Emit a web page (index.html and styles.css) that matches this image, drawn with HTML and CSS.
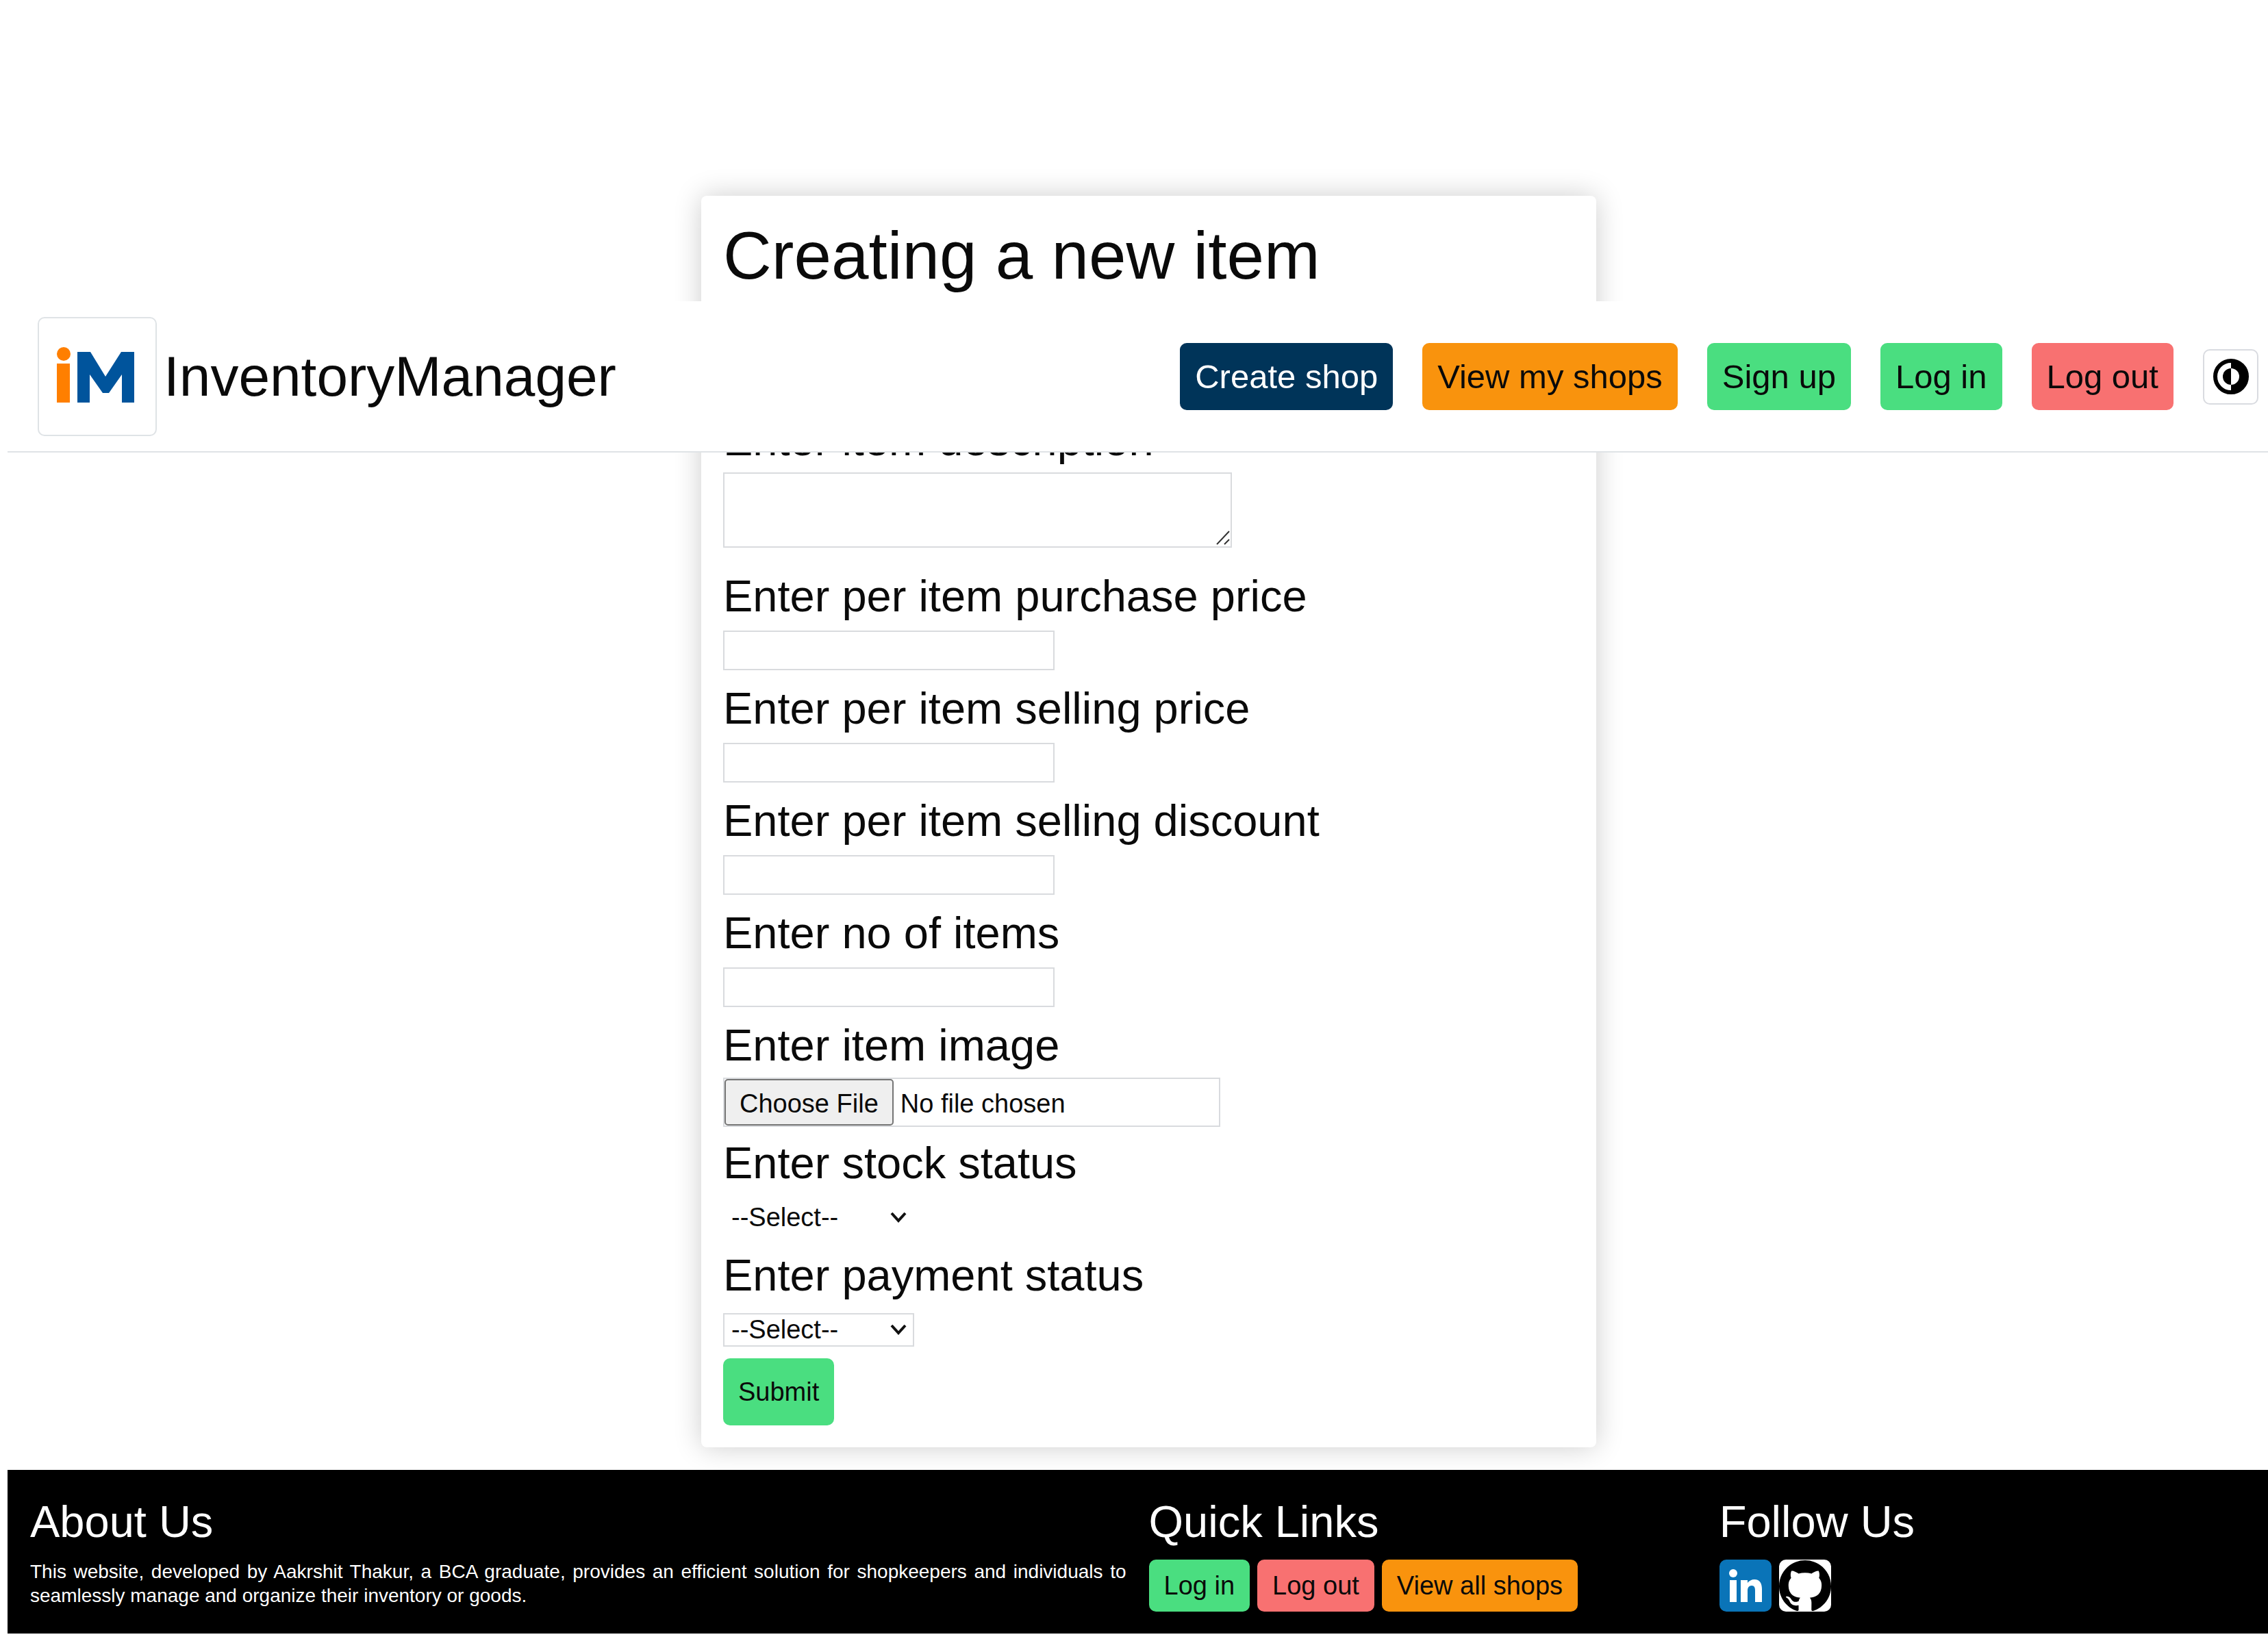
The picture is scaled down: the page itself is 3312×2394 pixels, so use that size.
FILE: index.html
```html
<!DOCTYPE html>
<html lang="en">
<head>
<meta charset="utf-8">
<meta name="viewport" content="width=device-width, initial-scale=1">
<title>InventoryManager</title>
<link rel="stylesheet" href="styles.css">
</head>
<body>
<div class="page">
  <header class="navbar">
    <a class="brand" href="#">
      <span class="brand-logo">
        <svg viewBox="0 0 170 170" aria-hidden="true">
          <g fill="#ff7f00"><circle cx="36" cy="52" r="10"/><rect x="26" y="66" width="19" height="57"/></g>
          <path fill="#00549c" d="M56 123V49h19l22 36 23-36h19v74h-18V82l-19 27h-9L74 82v41z"/>
        </svg>
      </span>
      <span class="brand-name">InventoryManager</span>
    </a>
    <nav class="nav-links">
      <a class="btn btn-navy" href="#">Create shop</a>
      <a class="btn btn-orange" href="#">View my shops</a>
      <a class="btn btn-green" href="#">Sign up</a>
      <a class="btn btn-green" href="#">Log in</a>
      <a class="btn btn-red" href="#">Log out</a>
      <button class="theme-toggle" type="button" aria-label="Toggle theme">
        <svg viewBox="0 0 52 52" aria-hidden="true">
          <circle cx="26" cy="26" r="23" fill="#fff" stroke="#000" stroke-width="6"/>
          <path d="M26 2a24 24 0 0 1 0 48z"/>
          <path d="M26 14a12 12 0 0 0 0 24z"/>
          <path fill="#fff" d="M26 14a12 12 0 0 1 0 24z"/>
        </svg>
      </button>
    </nav>
  </header>

  <main class="main">
    <form class="card">
      <h1 class="card-title">Creating a new item</h1>
      <div class="field">
        <label for="name">Enter item name</label>
        <div class="control"><input class="input" id="name" type="text"></div>
      </div>
      <div class="field">
        <label for="description">Enter item description</label>
        <div class="control control-area">
          <textarea class="textarea" id="description"></textarea>
          <svg class="grip" viewBox="0 0 20 24" aria-hidden="true"><path d="M1 22 19 3M12 22l7-7" fill="none" stroke="#333" stroke-width="2"/></svg>
        </div>
      </div>
      <div class="field">
        <label for="purchase">Enter per item purchase price</label>
        <div class="control"><input class="input" id="purchase" type="text"></div>
      </div>
      <div class="field">
        <label for="selling">Enter per item selling price</label>
        <div class="control"><input class="input" id="selling" type="text"></div>
      </div>
      <div class="field">
        <label for="discount">Enter per item selling discount</label>
        <div class="control"><input class="input" id="discount" type="text"></div>
      </div>
      <div class="field">
        <label for="count">Enter no of items</label>
        <div class="control"><input class="input" id="count" type="text"></div>
      </div>
      <div class="field">
        <label for="image">Enter item image</label>
        <div class="control"><input class="file" id="image" type="file"></div>
      </div>
      <div class="field">
        <label for="stock">Enter stock status</label>
        <div class="control">
          <span class="select-wrap">
            <select class="select select-plain" id="stock"><option>--Select--</option></select>
            <svg class="chevron" viewBox="0 0 24 16" aria-hidden="true"><path d="M2 2l10 11L22 2" fill="none" stroke="#111" stroke-width="4"/></svg>
          </span>
        </div>
      </div>
      <div class="field">
        <label for="payment">Enter payment status</label>
        <div class="control">
          <span class="select-wrap">
            <select class="select" id="payment"><option>--Select--</option></select>
            <svg class="chevron" viewBox="0 0 24 16" aria-hidden="true"><path d="M2 2l10 11L22 2" fill="none" stroke="#111" stroke-width="4"/></svg>
          </span>
        </div>
      </div>
      <button class="submit" type="submit">Submit</button>
    </form>
  </main>

  <footer class="footer">
    <section class="about">
      <h2>About Us</h2>
      <p>This website, developed by Aakrshit Thakur, a BCA graduate, provides an efficient solution for shopkeepers and individuals to seamlessly manage and organize their inventory or goods.</p>
    </section>
    <section>
      <h2>Quick Links</h2>
      <div class="row">
        <a class="btn btn-small btn-green" href="#">Log in</a>
        <a class="btn btn-small btn-red" href="#">Log out</a>
        <a class="btn btn-small btn-orange" href="#">View all shops</a>
      </div>
    </section>
    <section>
      <h2>Follow Us</h2>
      <div class="row">
        <a class="social social-linkedin" href="#" aria-label="LinkedIn">
          <svg viewBox="0 0 76 76" aria-hidden="true"><g fill="#fff"><circle cx="20" cy="20" r="6"/><path d="M15 30h10v32H15zM31 30h10v4c2-3 6-5 10-5 8 0 11 6 11 14v19H52V45c0-4-1-7-5-7s-6 3-6 7v17H31z"/></g></svg>
        </a>
        <a class="social social-github" href="#" aria-label="GitHub">
          <svg viewBox="0 0 24 24" aria-hidden="true"><path d="M12 .297c-6.63 0-12 5.373-12 12 0 5.303 3.438 9.8 8.205 11.385.6.113.82-.258.82-.577 0-.285-.01-1.04-.015-2.04-3.338.724-4.042-1.61-4.042-1.61C4.422 18.07 3.633 17.7 3.633 17.7c-1.087-.744.084-.729.084-.729 1.205.084 1.838 1.236 1.838 1.236 1.07 1.835 2.809 1.305 3.495.998.108-.776.417-1.305.76-1.605-2.665-.3-5.466-1.332-5.466-5.93 0-1.31.465-2.38 1.235-3.22-.135-.303-.54-1.523.105-3.176 0 0 1.005-.322 3.3 1.23.96-.267 1.98-.399 3-.405 1.02.006 2.04.138 3 .405 2.28-1.552 3.285-1.23 3.285-1.23.645 1.653.24 2.873.12 3.176.765.84 1.23 1.91 1.23 3.22 0 4.61-2.805 5.625-5.475 5.92.42.36.81 1.096.81 2.22 0 1.606-.015 2.896-.015 3.286 0 .315.21.69.825.57C20.565 22.092 24 17.592 24 12.297c0-6.627-5.373-12-12-12"/></svg>
        </a>
      </div>
    </section>
  </footer>
</div>
</body>
</html>
```
FILE: styles.css
```css
* { box-sizing: border-box; }

html { overflow-x: clip; }

body {
  margin: 0;
  overflow-x: clip;
  background: #fff;
  color: #0a0a0a;
  font-family: "Liberation Sans", Arial, sans-serif;
  font-size: 38px;
}

h1, h2, p { margin: 0; font-weight: 400; }
a { color: inherit; text-decoration: none; }
svg { display: block; }

/* the page runs slightly past the right edge of the window */
.page {
  position: relative;
  margin: 0 -32px 0 11px;
}

/* navbar floats over the form */
.navbar {
  position: absolute;
  top: 440px;
  left: 0;
  right: 0;
  z-index: 1;
  display: flex;
  align-items: center;
  justify-content: space-between;
  padding: 23px 46px 22px 44px;
  background: #fff;
  border-bottom: 2px solid #dfe3e6;
}

.brand { display: flex; align-items: center; gap: 10px; }

.brand-logo {
  width: 174px;
  height: 174px;
  border: 2px solid #dfe3e6;
  border-radius: 10px;
}

.brand-name { font-size: 82px; line-height: 92px; }

.nav-links { display: flex; align-items: center; gap: 43px; }

.btn {
  padding: 0 22px;
  border-radius: 10px;
  font-size: 49px;
  line-height: 98px;
  white-space: nowrap;
}

.btn-small { font-size: 38px; line-height: 76px; }
.btn-navy { background: #003459; color: #fff; }
.btn-orange { background: #f9930d; }
.btn-green { background: #4ade80; }
.btn-red { background: #f87171; }

.theme-toggle {
  display: grid;
  place-items: center;
  width: 81px;
  height: 81px;
  padding: 0;
  background: #fff;
  border: 2px solid #d9dbe0;
  border-radius: 10px;
}

.theme-toggle svg { width: 52px; height: 52px; }

.main {
  display: flex;
  justify-content: center;
  padding: 286px 0 33px;
}

.card {
  display: flex;
  flex-direction: column;
  align-items: flex-start;
  width: 1307px;
  max-width: 100%;
  padding: 32px;
  border-radius: 8px;
  background: #fff;
  box-shadow: 0 0 40px rgba(0, 0, 0, 0.2);
}

.card-title {
  margin-bottom: 14px;
  font-size: 98px;
  line-height: 110px;
}

.field + .field { margin-top: 6px; }

.field label {
  display: block;
  font-size: 65px;
  line-height: 74px;
}

.control {
  display: flex;
  align-items: center;
  box-sizing: content-box;
  min-height: 64px;
  padding: 10px 0;
}

.control-area {
  position: relative;
  padding-bottom: 28px;
}

.input, .textarea, .file, .select {
  margin: 0;
  background: #fff;
  border: 2px solid #d9dbde;
  border-radius: 0;
  color: inherit;
  font: inherit;
}

.input { width: 484px; height: 58px; padding: 0 4px; }
.textarea { width: 743px; height: 110px; padding: 4px; resize: none; }

.grip {
  position: absolute;
  right: 3px;
  bottom: 31px;
  width: 20px;
  height: 24px;
}

.file { width: 726px; height: 72px; line-height: 68px; }

.file::file-selector-button {
  height: 68px;
  margin: 0 10px 0 0;
  padding: 0 20px;
  background: #efefef;
  border: 2px solid #767676;
  border-radius: 5px;
  color: inherit;
  font: inherit;
}

.select-wrap { position: relative; }

.select {
  display: block;
  width: 279px;
  height: 49px;
  padding: 0 10px;
  appearance: none;
  line-height: 45px;
}

.select-plain { border-color: #fff; }

.chevron {
  position: absolute;
  top: 16px;
  right: 11px;
  width: 24px;
  height: 16px;
  pointer-events: none;
}

.submit {
  height: 98px;
  padding: 0 22px;
  background: #4ade80;
  border: 0;
  border-radius: 10px;
  color: inherit;
  font: inherit;
}

.footer {
  display: grid;
  grid-template-columns: 2fr 1fr 1fr;
  padding: 39px 0 32px;
  background: #000;
  color: #fff;
}

.footer h2 {
  margin-bottom: 18px;
  font-size: 65px;
  line-height: 74px;
}

.footer p {
  font-size: 28px;
  line-height: 35px;
  text-align: justify;
}

.about { padding: 0 33px; }
.row { display: flex; gap: 11px; }
.row .btn { color: #0a0a0a; }

.social {
  width: 76px;
  height: 76px;
  border-radius: 10px;
  overflow: hidden;
}

.social-linkedin { background: #0a74b8; }
.social-github { background: #fff; }
```
